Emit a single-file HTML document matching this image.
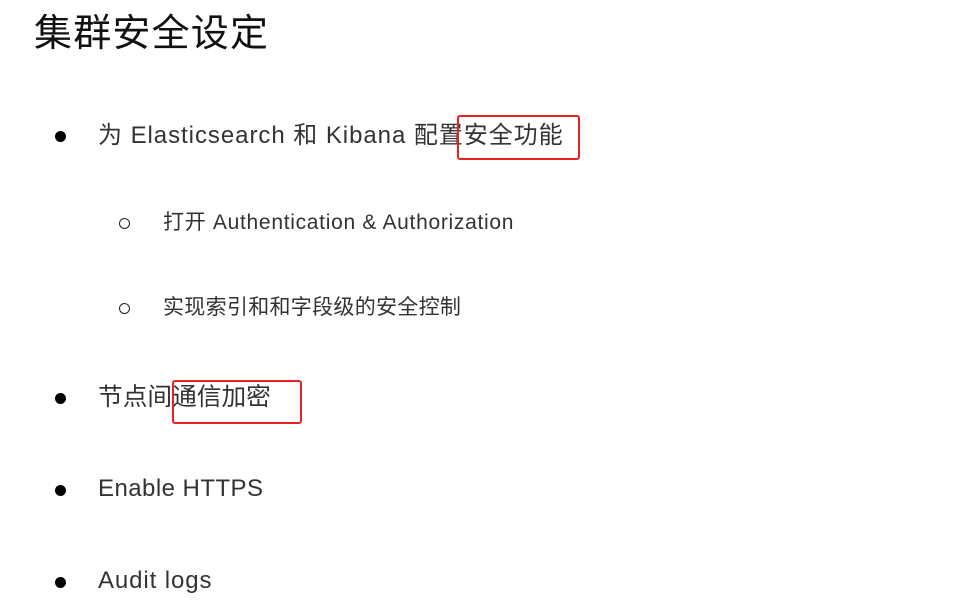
<!DOCTYPE html>
<html><head><meta charset="utf-8"><style>
body{margin:0;width:980px;height:604px;background:#fff;overflow:hidden;position:relative;font-family:"Liberation Sans","Noto Sans CJK SC",sans-serif;color:#222}
.t{position:absolute;white-space:nowrap;line-height:1}
.dot{position:absolute;width:11px;height:11px;border-radius:50%;background:#000}
.ring{position:absolute;width:9px;height:9px;border-radius:50%;border:1.5px solid #222}
.box{position:absolute;border:2px solid #e8231f;border-radius:3px}
</style></head><body>
<div class="t" style="left:34px;top:15px;font-size:38px;letter-spacing:1.2px;color:#111">集群安全设定</div>

<div class="dot" style="left:55px;top:131px"></div>
<div class="t" style="left:98px;top:124px;font-size:24px;letter-spacing:0.95px;color:#333">为 Elasticsearch 和 Kibana 配置安全功能</div>
<div class="box" style="left:457px;top:115px;width:119px;height:41px"></div>

<div class="ring" style="left:119px;top:218px"></div>
<div class="t" style="left:163px;top:212px;font-size:21px;letter-spacing:0.7px;color:#333">打开 Authentication &amp; Authorization</div>

<div class="ring" style="left:119px;top:303px"></div>
<div class="t" style="left:163px;top:297px;font-size:21px;letter-spacing:0.3px;color:#333">实现索引和和字段级的安全控制</div>

<div class="dot" style="left:55px;top:393px"></div>
<div class="t" style="left:98px;top:386px;font-size:24.7px;color:#333">节点间通信加密</div>
<div class="box" style="left:172px;top:380px;width:126px;height:40px"></div>

<div class="dot" style="left:55px;top:485px"></div>
<div class="t" style="left:98px;top:477px;font-size:24px;letter-spacing:0.45px;color:#333">Enable HTTPS</div>

<div class="dot" style="left:55px;top:577px"></div>
<div class="t" style="left:98px;top:569px;font-size:24px;letter-spacing:0.9px;color:#333">Audit logs</div>
</body></html>
